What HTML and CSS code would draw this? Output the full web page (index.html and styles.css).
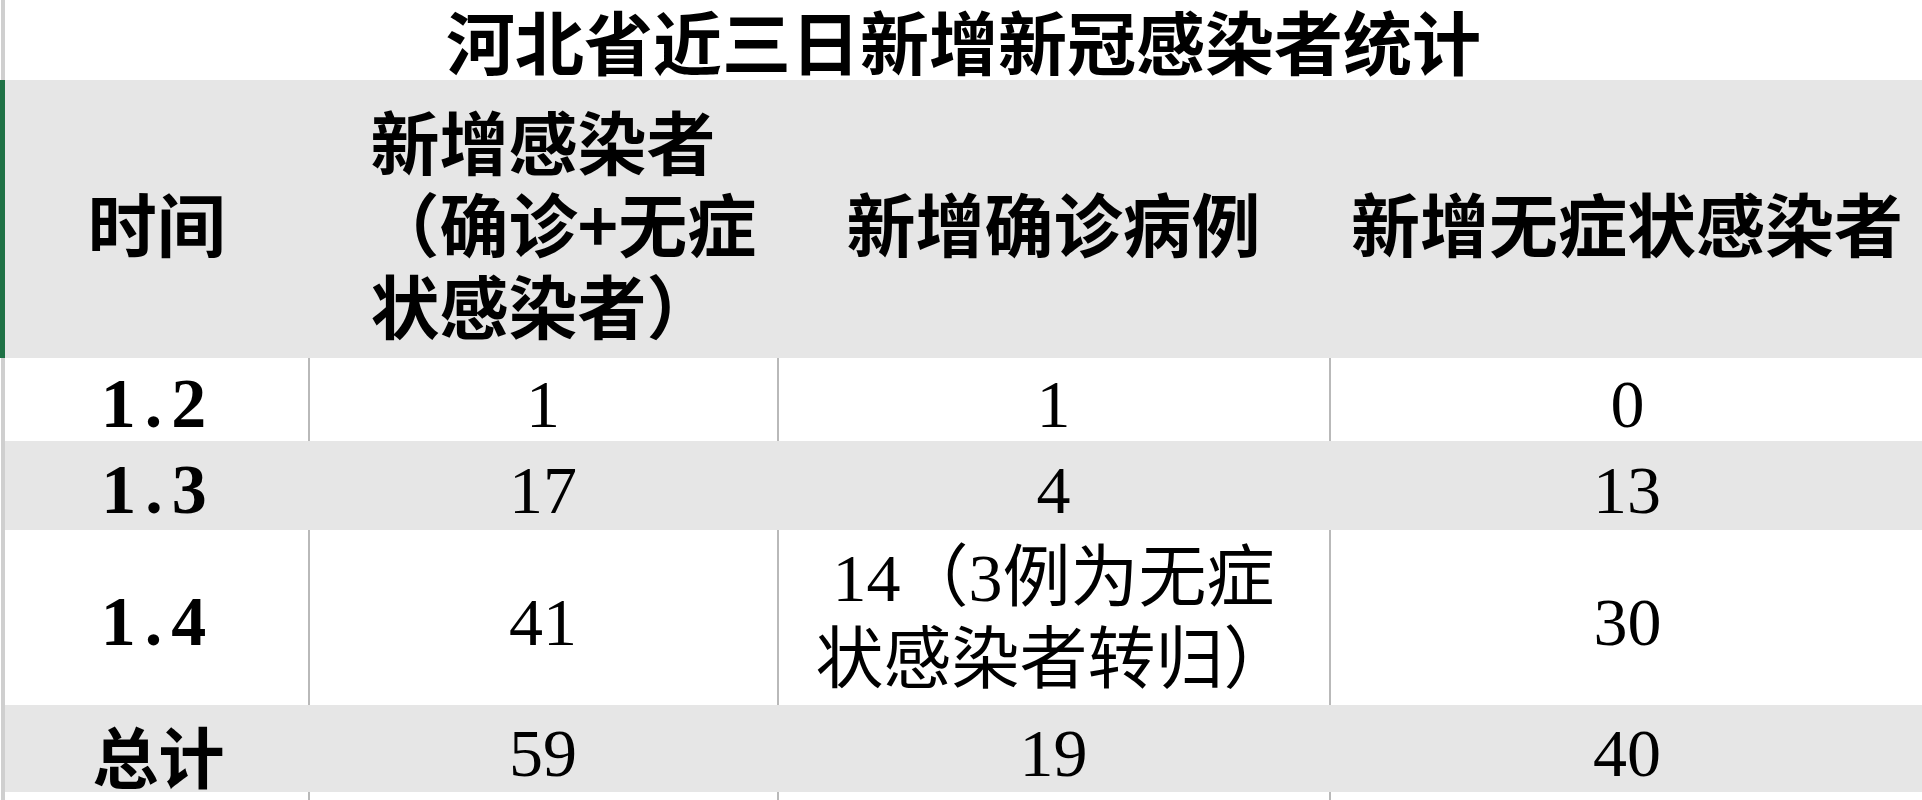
FILE: index.html
```html
<!DOCTYPE html>
<html lang="zh-CN">
<head>
<meta charset="utf-8">
<title>河北省近三日新增新冠感染者统计</title>
<link rel="stylesheet" href="styles.css">
</head>
<body>
<table class="sheet">
  <colgroup>
    <col class="c1"><col class="c2"><col class="c3"><col class="c4">
  </colgroup>
  <tr class="row-title">
    <td class="edge" colspan="4"><div class="title">河北省近三日新增新冠感染者统计</div></td>
  </tr>
  <tr class="row-head">
    <td class="edge-green hd">时间</td>
    <td class="hd hd-left">新增感染者<br>（确诊+无症<br>状感染者）</td>
    <td class="hd">新增确诊病例</td>
    <td class="hd">新增无症状感染者</td>
  </tr>
  <tr class="row-white r1">
    <td class="edge date">1.2</td>
    <td class="num">1</td>
    <td class="num">1</td>
    <td class="num">0</td>
  </tr>
  <tr class="row-gray r2">
    <td class="edge date">1.3</td>
    <td class="num">17</td>
    <td class="num">4</td>
    <td class="num">13</td>
  </tr>
  <tr class="row-white r3">
    <td class="edge date">1.4</td>
    <td class="num">41</td>
    <td class="num multi">14（3例为无症<br>状感染者转归）</td>
    <td class="num">30</td>
  </tr>
  <tr class="row-gray r4">
    <td class="edge date total">总计</td>
    <td class="num">59</td>
    <td class="num">19</td>
    <td class="num">40</td>
  </tr>
  <tr class="row-white r5">
    <td class="edge"></td><td></td><td></td><td></td>
  </tr>
</table>
</body>
</html>
```

FILE: styles.css
```css
html, body {
  margin: 0;
  padding: 0;
  background: #ffffff;
}

body {
  width: 1922px;
  height: 800px;
  overflow: hidden;
  font-family: "Noto Sans CJK SC", sans-serif;
  color: #000;
}

.sheet {
  width: 1922px;
  border-collapse: collapse;
  table-layout: fixed;
}

.c1 { width: 306px; }
.c2 { width: 469px; }
.c3 { width: 552px; }
.c4 { width: 595px; }

.sheet td {
  padding: 0;
  text-align: center;
  vertical-align: middle;
}

/* row heights */
.row-title { height: 80px; }
.row-head { height: 278px; }
.r1 { height: 83px; }
.r2 { height: 89px; }
.r3 { height: 175px; }
.r4 { height: 87px; }
.r5 { height: 8px; }

/* title */
.row-title td {
  background: #ffffff;
  border-right: 4px solid #d6d6d6;
}
.title {
  font-size: 69px;
  font-weight: 700;
  line-height: 72px;
  white-space: nowrap;
}

/* header */
.row-head td {
  background: #e6e6e6;
}
.hd {
  font-size: 69px;
  font-weight: 700;
  line-height: 82px;
  padding-top: 6px !important;
  white-space: nowrap;
}
.hd-left {
  text-align: left !important;
  padding-left: 62px !important;
}

/* left edge */
.edge {
  border-left: 4px solid #cfcfcf;
}
.edge-green {
  border-left: 5px solid #1e7145;
}

/* data rows */
.row-white td {
  background: #ffffff;
  border-right: 2px solid #b9b9b9;
}
.row-white td:last-child {
  border-right: none;
}
.row-gray td {
  background: #e6e6e6;
}

.num {
  font-family: "Liberation Serif", "Noto Sans CJK SC", serif;
  font-size: 68px;
  font-weight: 400;
  line-height: 60px;
  padding-top: 8px !important;
  white-space: nowrap;
}
.multi {
  line-height: 82px;
  padding-top: 2px !important;
}
.date {
  font-family: "Liberation Serif", serif;
  font-size: 70px;
  font-weight: 700;
  line-height: 60px;
  letter-spacing: 9px;
  padding-top: 8px !important;
  padding-left: 4px !important;
}
.total {
  font-family: "Noto Sans CJK SC", sans-serif;
  font-size: 66px;
  letter-spacing: 0;
  padding-top: 10px !important;
}
```
